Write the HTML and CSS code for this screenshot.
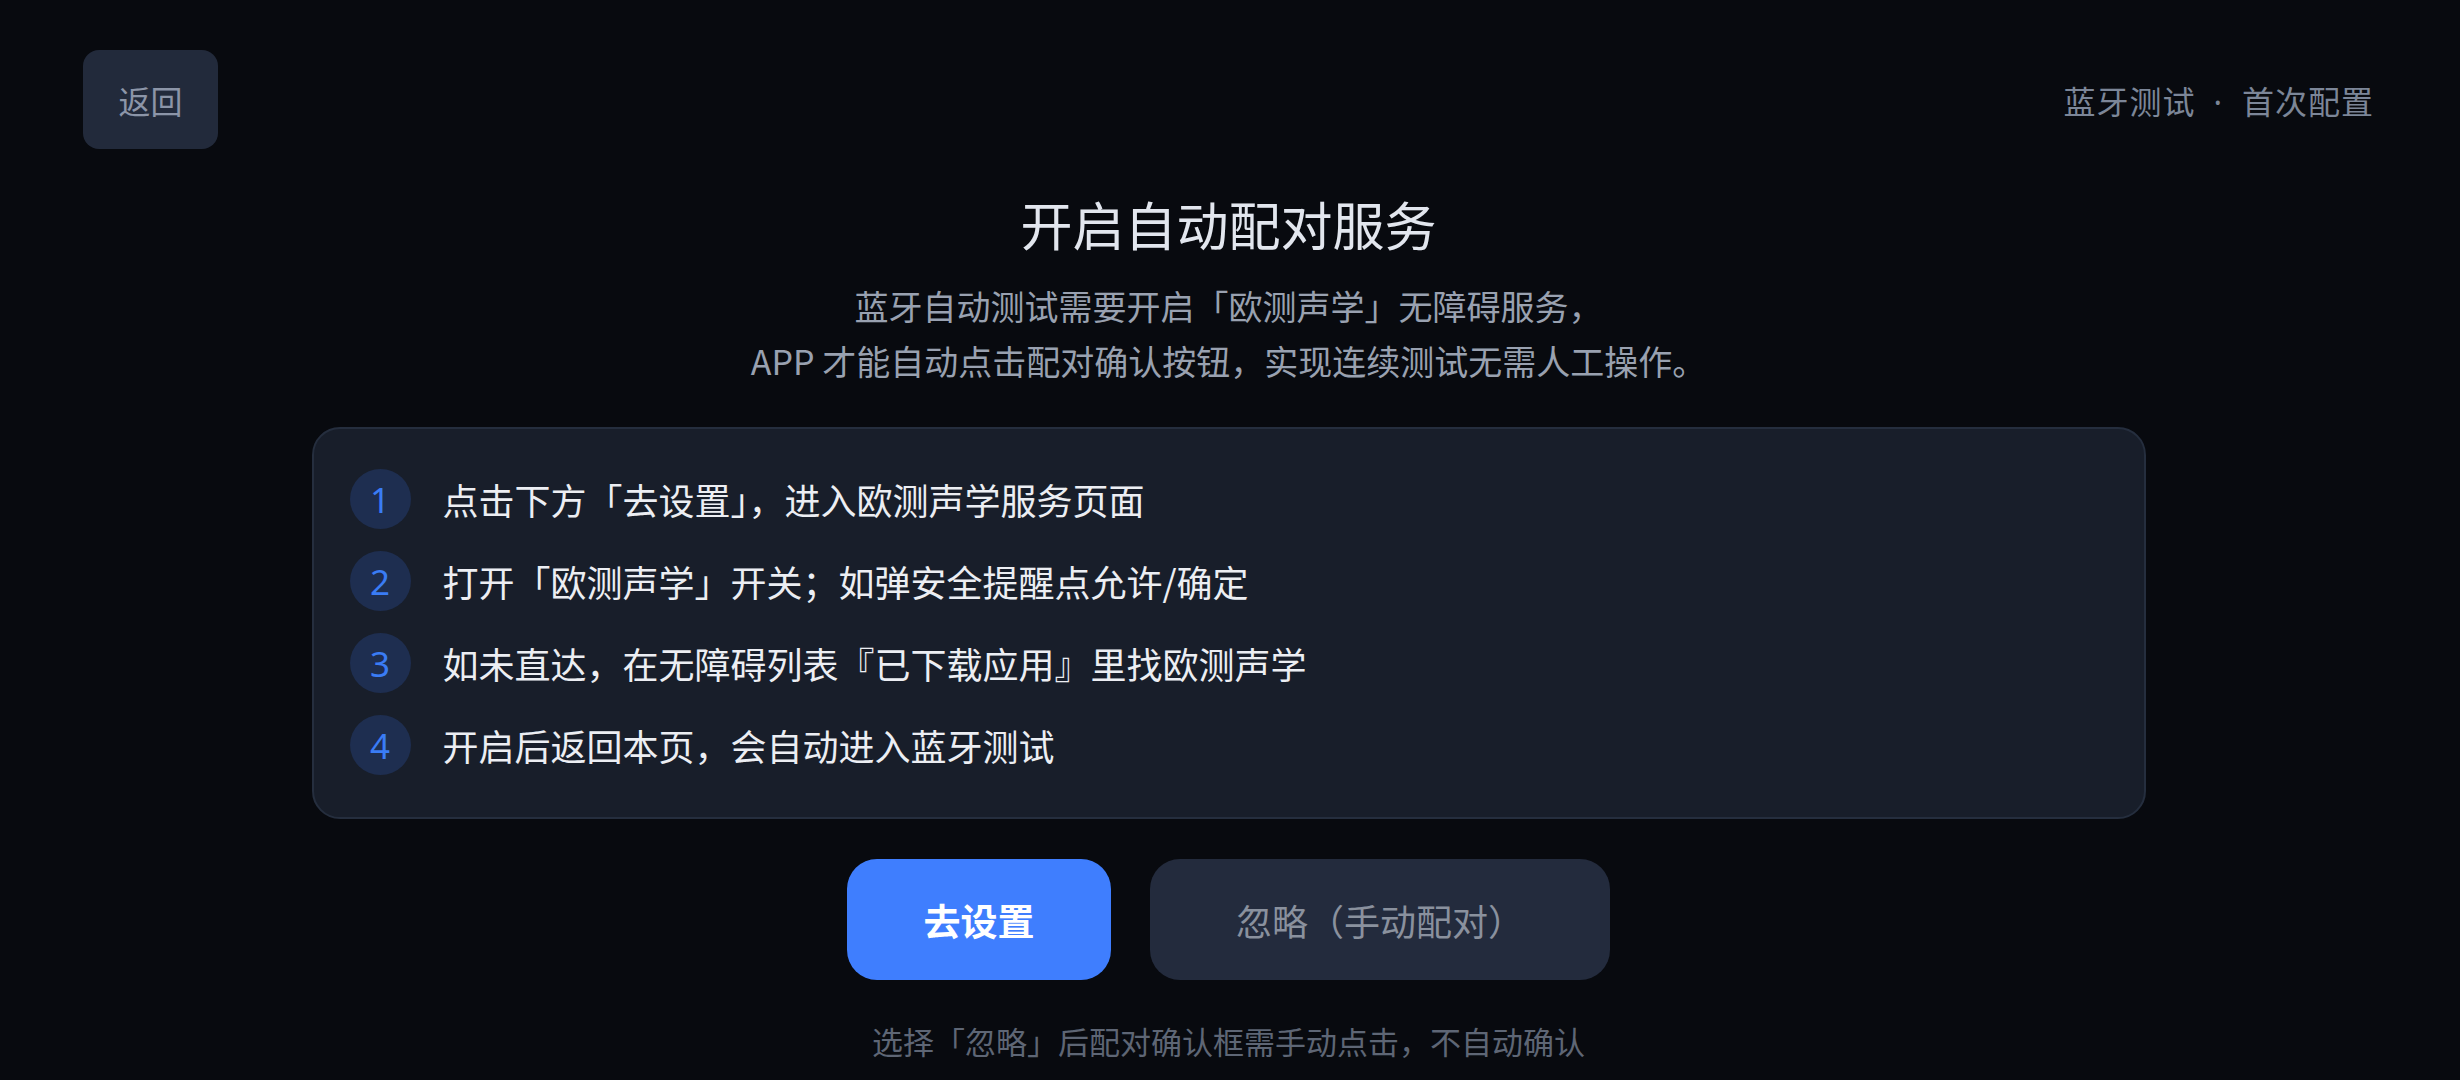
FILE: index.html
```html
<!DOCTYPE html>
<html lang="zh-CN">
<head>
<meta charset="utf-8">
<title>开启自动配对服务</title>
<link rel="stylesheet" href="styles.css">
</head>
<body>
<div class="page">
  <header class="topbar">
    <button class="back-btn">返回</button>
    <div class="crumb">蓝牙测试<span class="dot">·</span>首次配置</div>
  </header>

  <h1 class="title">开启自动配对服务</h1>
  <p class="subtitle">蓝牙自动测试需要开启「欧测声学」无障碍服务，<br>APP 才能自动点击配对确认按钮，实现连续测试无需人工操作。</p>

  <section class="steps">
    <div class="step"><span class="num">1</span><span class="step-text">点击下方「去设置」，进入欧测声学服务页面</span></div>
    <div class="step"><span class="num">2</span><span class="step-text">打开「欧测声学」开关；如弹安全提醒点允许/确定</span></div>
    <div class="step"><span class="num">3</span><span class="step-text">如未直达，在无障碍列表『已下载应用』里找欧测声学</span></div>
    <div class="step"><span class="num">4</span><span class="step-text">开启后返回本页，会自动进入蓝牙测试</span></div>
  </section>

  <div class="actions">
    <button class="btn btn-primary">去设置</button>
    <button class="btn btn-secondary">忽略（手动配对）</button>
  </div>

  <p class="note">选择「忽略」后配对确认框需手动点击，不自动确认</p>
</div>
</body>
</html>
```

FILE: styles.css
```css
* { box-sizing: border-box; }
html, body {
  margin: 0;
  padding: 0;
  background: #080a0f;
  height: 100%;
}
body {
  font-family: "Noto Sans CJK SC", "Noto Sans", sans-serif;
  color: #e4e8ef;
  overflow: hidden;
}
.page {
  display: flex;
  flex-direction: column;
  align-items: center;
  padding: 50px 86px 0 83px;
  height: 1080px;
}
.topbar {
  width: 100%;
  display: flex;
  justify-content: space-between;
  align-items: center;
  height: 99px;
}
.back-btn {
  width: 135px;
  height: 99px;
  border: none;
  border-radius: 16px;
  background: #222a3b;
  color: #8c95a8;
  font-family: inherit;
  font-size: 32px;
  padding: 0;
}
.crumb {
  font-size: 32px;
  color: #7c8698;
  letter-spacing: 1px;
}
.dot {
  font-family: "Noto Sans", sans-serif;
  margin: 0 19px 0 18px;
}
.title {
  margin: 41px 0 0;
  font-size: 52px;
  line-height: 68px;
  font-weight: 400;
  color: #e2e6ee;
}
.subtitle {
  margin: 20px 0 0;
  font-size: 34px;
  line-height: 55px;
  text-align: center;
  color: #99a1b0;
}
.steps {
  margin-top: 39px;
  width: 1834px;
  height: 392px;
  border: 2px solid #252e3e;
  border-radius: 28px;
  background: #181e2a;
  padding: 40px 36px;
  display: flex;
  flex-direction: column;
  gap: 22px;
}
.step {
  display: flex;
  align-items: center;
  gap: 32px;
  height: 60px;
}
.num {
  width: 61px;
  height: 60px;
  border-radius: 50%;
  background: #1e2e50;
  color: #3a7cf5;
  font-family: "Noto Sans", sans-serif;
  font-size: 35px;
  display: flex;
  align-items: center;
  justify-content: center;
  flex-shrink: 0;
}
.step-text {
  font-size: 36px;
  color: #eceef3;
}
.actions {
  margin-top: 40px;
  display: flex;
  gap: 39px;
}
.btn {
  height: 121px;
  border: none;
  border-radius: 30px;
  font-family: inherit;
  font-size: 36px;
  padding: 0;
}
.btn-primary {
  width: 264px;
  background: #3f7efe;
  color: #ffffff;
  font-weight: 700;
  font-size: 37px;
}
.btn-secondary {
  width: 460px;
  background: #232b3d;
  color: #8a919e;
}
.note {
  margin: 38px 0 0;
  font-size: 31px;
  line-height: 46px;
  color: #5e6675;
}
```
